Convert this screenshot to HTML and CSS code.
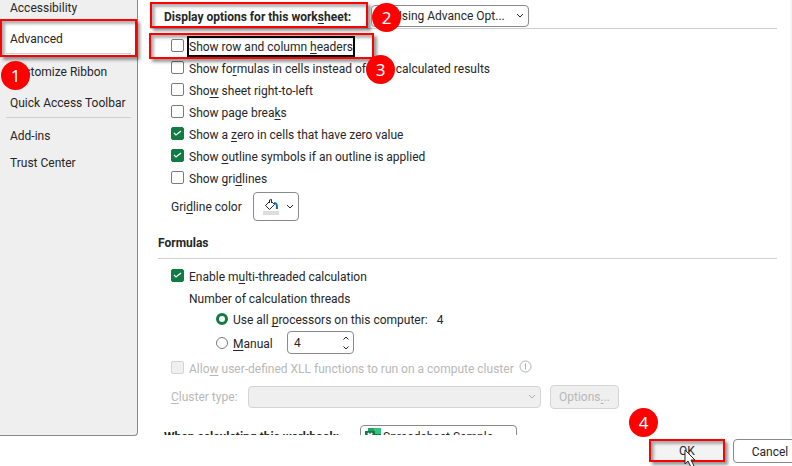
FILE: index.html
```html
<!DOCTYPE html>
<html lang="en">
<head>
    <meta charset="UTF-8">
    <meta name="viewport" content="width=device-width, initial-scale=1.0">
    <title>Excel Options</title>
    <link rel="stylesheet" href="styles.css">
</head>
<body>
    <div class="body-row">
        <nav class="sidebar">
            <a href="#" class="nav-item">Accessibility</a>
            <a href="#" class="nav-item active mark">Advanced<span class="badge badge-1">1</span></a>
            <a href="#" class="nav-item after-line">Customize Ribbon</a>
            <a href="#" class="nav-item toolbar">Quick Access Toolbar</a>
            <a href="#" class="nav-item addins">Add-ins</a>
            <a href="#" class="nav-item">Trust Center</a>
        </nav>
        <main class="content">
            <div class="section-head">
                <label for="sheet" class="section-title mark">Display options for this work<u>s</u>heet:<span class="badge badge-2">2</span></label>
                <div class="dropdown sheet">
                    <select id="sheet"><option>Using Advance Opt...</option></select>
                    <svg class="chevron" viewBox="0 0 8 6"><path d="M1 1l3 3 3-3"/></svg>
                </div>
            </div>
            <div class="options">
                <div class="check first mark"><input type="checkbox" id="headers"><label for="headers" class="focused">Show row and column <u>h</u>eaders</label><span class="badge badge-3">3</span></div>
                <div class="check"><input type="checkbox" id="formulas"><label for="formulas">Show fo<u>r</u>mulas in cells instead of their calculated results</label></div>
                <div class="check"><input type="checkbox" id="rtl"><label for="rtl">Sho<u>w</u> sheet right-to-left</label></div>
                <div class="check"><input type="checkbox" id="breaks"><label for="breaks">Show page brea<u>k</u>s</label></div>
                <div class="check"><input type="checkbox" id="zero" checked><label for="zero">Show a <u>z</u>ero in cells that have zero value</label></div>
                <div class="check"><input type="checkbox" id="outline" checked><label for="outline">Show <u>o</u>utline symbols if an outline is applied</label></div>
                <div class="check"><input type="checkbox" id="gridlines"><label for="gridlines">Show gri<u>d</u>lines</label></div>
            </div>
            <div class="color-row">
                <label for="color">Gri<u>d</u>line color</label>
                <button type="button" id="color" class="color-button">
                    <svg class="bucket" viewBox="0 0 16 16">
                        <path class="swatch" d="M0 12h16v4H0z"/>
                        <path class="can" d="M6.500 4V1l2-.5V4M7 2L2.500 6.500l4 4 5-5L8 2"/>
                        <path class="paint" d="M11 4c3 0 3 2 3 6"/>
                    </svg>
                    <svg class="chevron-small" viewBox="0 0 8 6"><path d="M1 1l3 3 3-3"/></svg>
                </button>
            </div>
            <h2 class="formulas-title">Formulas</h2>
            <div class="check threads"><input type="checkbox" id="multi" checked><label for="multi">Enable m<u>u</u>lti-threaded calculation</label></div>
            <p class="threads-label">Number of calculation threads</p>
            <div class="radio"><input type="radio" name="cpu" id="all" checked><label for="all">Use all <u>p</u>rocessors on this computer:</label><span class="count">4</span></div>
            <div class="radio manual">
                <input type="radio" name="cpu" id="manual"><label for="manual"><u>M</u>anual</label>
                <div class="spinner">
                    <input type="text" value="4" aria-label="Threads">
                    <svg class="arrows" viewBox="0 0 8 16"><path d="M1.500 4.500L4 2l2.500 2.500M1.500 11.500L4 14l2.500-2.500"/></svg>
                </div>
            </div>
            <div class="check disabled">
                <input type="checkbox" id="xll" disabled><label for="xll">Allo<u>w</u> user-defined XLL functions to run on a compute cluster</label>
                <svg class="info" viewBox="0 0 13 13"><circle cx="6.5" cy="6.5" r="5.5"/><path d="M6.500 3.500v6"/></svg>
            </div>
            <div class="cluster disabled">
                <label for="cluster"><u>C</u>luster type:</label>
                <div class="dropdown cluster-type">
                    <select id="cluster" disabled></select>
                    <svg class="chevron" viewBox="0 0 8 6"><path d="M1 1l3 3 3-3"/></svg>
                </div>
                <button type="button" class="options-button" disabled>Options<u>.</u>..</button>
            </div>
            <div class="workbook">
                <label for="workbook">When calculating this workbook:</label>
                <div class="dropdown book">
                    <svg class="excel" viewBox="0 0 16 16"><path fill="#21a366" d="M3 0h7v6H3z"/><path fill="#33c481" d="M9 0h7v6H9z"/><path fill="#107c41" d="M3 6h13v10H3zM0 3h10v10H0z"/><path stroke="#fff" stroke-width="2" d="M3 5l4 6M7 5l-4 6"/></svg>
                    <select id="workbook"><option>Spreadsheet Sample</option></select>
                </div>
            </div>
        </main>
    </div>
    <footer class="footer">
        <button type="button" class="ok mark">OK<span class="badge badge-4">4</span>
            <svg class="cursor" viewBox="0 0 12 18"><path d="M1 1v14l3-3 3 6 3-1-3-6h4z"/></svg>
        </button>
        <button type="button" class="cancel">Cancel</button>
    </footer>
</body>
</html>
```
FILE: styles.css
```css
* {
    box-sizing: border-box;
}
body {
    margin: 0;
    height: 100vh;
    display: flex;
    flex-direction: column;
    overflow: hidden;
    background: #fff;
    color: #262626;
    font: 12px/16px Roboto, "Noto Sans", sans-serif;
}
button, input, select {
    font: inherit;
    color: inherit;
}
u {
    text-underline-offset: 2px;
}
.body-row {
    flex: 1;
    min-height: 0;
    display: flex;
    border-right: 2px solid #f5f5f5;
}

/* left navigation */
.sidebar {
    flex: none;
    width: 138px;
    background: #efefef;
    border-right: 1px solid #8a8a8a;
    border-bottom: 1px solid #8a8a8a;
    border-bottom-right-radius: 4px;
}
.nav-item {
    display: block;
    padding: 5px 10px 6px;
    color: #262626;
    text-decoration: none;
    white-space: nowrap;
}
.nav-item:first-child {
    padding-top: 0;
    padding-bottom: 3px;
}
.nav-item.active {
    height: 38px;
    padding: 10px 8px;
    background: #fff;
}
.active::after {
    content: "";
    display: block;
    margin: 6px -4px 0;
    border-top: 1px solid #d0d0d0;
}
.after-line {
    padding-top: 7px;
}
.toolbar {
    margin: 0 6px;
    padding: 9px 4px 6px;
    border-bottom: 1px solid #d0d0d0;
}
.addins {
    padding-top: 10px;
}

/* red callouts */
.mark {
    position: relative;
    border: 2px solid #f00;
    box-shadow: 3px 3px 3px rgba(0, 0, 0, 0.4), inset 3px 3px 3px rgba(0, 0, 0, 0.3);
}
.badge {
    position: absolute;
    z-index: 1;
    width: 29px;
    height: 29px;
    border-radius: 50%;
    background: #f00;
    color: #fff;
    font: 17px/29px "Noto Sans", sans-serif;
    text-align: center;
}
.badge-1 {
    left: -1px;
    top: 40px;
}
.badge-2 {
    left: 220px;
    top: -1px;
}
.badge-3 {
    left: 215px;
    top: 20px;
}
.badge-4 {
    left: -22px;
    top: -33px;
}

/* settings */
.content {
    flex: 1;
    min-width: 0;
    margin-bottom: 1px;
    padding: 2px 13px 0 20px;
    overflow: hidden;
}
.section-head {
    display: flex;
    align-items: center;
    gap: 3px;
    margin-left: -8px;
    border-bottom: 1px solid #d0d0d0;
}
.section-title {
    width: 218px;
    height: 26px;
    padding: 5px 0 0 12px;
    font-weight: bold;
    white-space: nowrap;
}
.dropdown {
    position: relative;
    display: flex;
}
.dropdown select {
    width: 100%;
    height: 22px;
    padding: 0 22px;
    appearance: none;
    background: #fff;
    border: 1px solid #8a8a8a;
    border-radius: 4px;
}
.sheet {
    width: 158px;
    padding-top: 2px;
}
.chevron {
    position: absolute;
    right: 5px;
    bottom: 8px;
    width: 8px;
    height: 6px;
}
svg {
    fill: none;
    stroke: #262626;
}
.options {
    padding-top: 4px;
}
.check {
    display: flex;
    align-items: center;
    gap: 5px;
    height: 22px;
    padding-left: 13px;
    white-space: nowrap;
}
.check label {
    padding-top: 1px;
}
.first {
    width: 225px;
    height: 26px;
    margin: 0 0 -2px -9px;
    padding-left: 20px;
}
input[type="checkbox"] {
    flex: none;
    width: 13px;
    height: 13px;
    margin: 0 0 1px;
    appearance: none;
    background: #fff;
    border: 1px solid #7a7a7a;
    border-radius: 2px;
}
input[type="checkbox"]:checked {
    background: #107c41 url("data:image/svg+xml,%3Csvg xmlns='http://www.w3.org/2000/svg' viewBox='0 0 13 13'%3E%3Cpath d='M3 6l2 2 5-4' fill='none' stroke='white' stroke-width='1.3'/%3E%3C/svg%3E") center / 13px;
    border-color: #107c41;
}
.focused {
    outline: 2px solid #000;
}
.color-row {
    display: flex;
    align-items: center;
    padding: 3px 0 0 13px;
}
.color-row label {
    width: 82px;
}
.color-button {
    display: flex;
    align-items: center;
    gap: 7px;
    width: 46px;
    height: 29px;
    padding: 0 6px 0 9px;
    background: #fff;
    border: 1px solid #8a8a8a;
    border-radius: 4px;
}
.bucket {
    flex: none;
    width: 16px;
    height: 16px;
}
.swatch {
    fill: #ddd;
    stroke: none;
}
.paint {
    stroke: #0f6cbd;
    stroke-width: 2;
}
.chevron-small {
    flex: none;
    width: 8px;
    height: 6px;
}
.formulas-title {
    margin: 14px 0 6px;
    padding-bottom: 7px;
    border-bottom: 1px solid #d0d0d0;
    font-size: 12px;
    line-height: 16px;
}
.threads-label {
    margin: 4px 0 4px 31px;
}
.radio {
    display: flex;
    align-items: center;
    gap: 5px;
    height: 16px;
    padding-left: 58px;
}
.radio label, .count {
    padding-top: 2px;
}
.radio > input {
    width: 12px;
    height: 12px;
    margin: 0;
    appearance: none;
    border: 1px solid #7a7a7a;
    border-radius: 50%;
}
.radio > input:checked {
    border: 3px solid #107c41;
}
.count {
    margin-left: 4px;
}
.manual {
    height: 23px;
    margin-top: 4px;
}
.manual label {
    width: 41px;
}
.spinner {
    position: relative;
    margin-left: 8px;
}
.spinner input {
    display: block;
    width: 67px;
    height: 23px;
    padding: 0 6px;
    border: 1px solid #8a8a8a;
    border-radius: 4px;
}
.arrows {
    position: absolute;
    right: 4px;
    top: 4px;
    width: 8px;
    height: 16px;
}
.disabled {
    color: #b8b8b8;
}
.check.disabled {
    margin-top: 3px;
}
.disabled input[type="checkbox"], .disabled .dropdown select, .options-button {
    background: #efefef;
    border-color: #d4d4d4;
    opacity: 1;
}
.disabled svg {
    stroke: #b0b0b0;
}
.info {
    width: 13px;
    height: 13px;
    margin-bottom: 4px;
}
.cluster {
    display: flex;
    align-items: center;
    padding: 6px 0 0 13px;
}
.cluster label {
    width: 77px;
}
.cluster-type {
    width: 293px;
    margin-right: 9px;
}
.options-button {
    width: 69px;
    height: 24px;
    padding: 0;
    border: 1px solid #d4d4d4;
    border-radius: 4px;
}
.workbook {
    display: flex;
    padding: 16px 0 0 6px;
}
.workbook label {
    width: 196px;
    padding-top: 4px;
    font-weight: bold;
}
.book {
    width: 157px;
}
.excel {
    position: absolute;
    left: 5px;
    top: 3px;
    width: 16px;
    height: 16px;
    stroke: none;
}
.dropdown.book select {
    height: 24px;
}

/* bottom buttons */
.footer {
    flex: none;
    display: flex;
    justify-content: flex-end;
    gap: 8px;
    height: 30px;
    margin-right: -15px;
    padding-top: 3px;
}
.ok {
    width: 76px;
    height: 23px;
    padding: 1px 0 0;
    background: #f3f3f3;
}
.cursor {
    position: absolute;
    left: 33px;
    top: 8px;
    width: 12px;
    height: 18px;
    fill: #fff;
}
.cancel {
    width: 74px;
    height: 24px;
    padding: 1px 0 0;
    background: #fff;
    border: 1px solid #8a8a8a;
    border-radius: 4px;
}
```
